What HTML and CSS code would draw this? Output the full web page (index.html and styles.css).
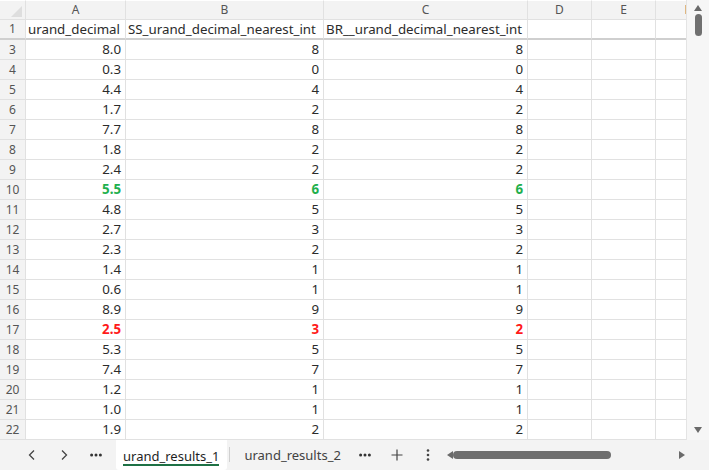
FILE: index.html
```html
<!DOCTYPE html>
<html>
<head>
<meta charset="utf-8">
<link rel="stylesheet" href="styles.css">
</head>
<body>
<div class="app">
  <div class="main">
    <div class="sheet">
      <div class="grid">
        <div class="corner"><span class="tri"></span></div>
        <div class="ch">A</div><div class="ch">B</div><div class="ch">C</div><div class="ch">D</div><div class="ch">E</div><div class="ch">F</div>

        <div class="rh frz">1</div>
        <div class="c frz tl">urand_decimal</div><div class="c frz tl">SS_urand_decimal_nearest_int</div><div class="c frz tl">BR__urand_decimal_nearest_int</div><div class="c frz"></div><div class="c frz"></div><div class="c frz"></div>

        <div class="rh">3</div><div class="c">8.0</div><div class="c">8</div><div class="c">8</div><div class="c"></div><div class="c"></div><div class="c"></div>
        <div class="rh">4</div><div class="c">0.3</div><div class="c">0</div><div class="c">0</div><div class="c"></div><div class="c"></div><div class="c"></div>
        <div class="rh">5</div><div class="c">4.4</div><div class="c">4</div><div class="c">4</div><div class="c"></div><div class="c"></div><div class="c"></div>
        <div class="rh">6</div><div class="c">1.7</div><div class="c">2</div><div class="c">2</div><div class="c"></div><div class="c"></div><div class="c"></div>
        <div class="rh">7</div><div class="c">7.7</div><div class="c">8</div><div class="c">8</div><div class="c"></div><div class="c"></div><div class="c"></div>
        <div class="rh">8</div><div class="c">1.8</div><div class="c">2</div><div class="c">2</div><div class="c"></div><div class="c"></div><div class="c"></div>
        <div class="rh">9</div><div class="c">2.4</div><div class="c">2</div><div class="c">2</div><div class="c"></div><div class="c"></div><div class="c"></div>
        <div class="rh">10</div><div class="c green">5.5</div><div class="c green">6</div><div class="c green">6</div><div class="c"></div><div class="c"></div><div class="c"></div>
        <div class="rh">11</div><div class="c">4.8</div><div class="c">5</div><div class="c">5</div><div class="c"></div><div class="c"></div><div class="c"></div>
        <div class="rh">12</div><div class="c">2.7</div><div class="c">3</div><div class="c">3</div><div class="c"></div><div class="c"></div><div class="c"></div>
        <div class="rh">13</div><div class="c">2.3</div><div class="c">2</div><div class="c">2</div><div class="c"></div><div class="c"></div><div class="c"></div>
        <div class="rh">14</div><div class="c">1.4</div><div class="c">1</div><div class="c">1</div><div class="c"></div><div class="c"></div><div class="c"></div>
        <div class="rh">15</div><div class="c">0.6</div><div class="c">1</div><div class="c">1</div><div class="c"></div><div class="c"></div><div class="c"></div>
        <div class="rh">16</div><div class="c">8.9</div><div class="c">9</div><div class="c">9</div><div class="c"></div><div class="c"></div><div class="c"></div>
        <div class="rh">17</div><div class="c red">2.5</div><div class="c red">3</div><div class="c red">2</div><div class="c"></div><div class="c"></div><div class="c"></div>
        <div class="rh">18</div><div class="c">5.3</div><div class="c">5</div><div class="c">5</div><div class="c"></div><div class="c"></div><div class="c"></div>
        <div class="rh">19</div><div class="c">7.4</div><div class="c">7</div><div class="c">7</div><div class="c"></div><div class="c"></div><div class="c"></div>
        <div class="rh">20</div><div class="c">1.2</div><div class="c">1</div><div class="c">1</div><div class="c"></div><div class="c"></div><div class="c"></div>
        <div class="rh">21</div><div class="c">1.0</div><div class="c">1</div><div class="c">1</div><div class="c"></div><div class="c"></div><div class="c"></div>
        <div class="rh">22</div><div class="c">1.9</div><div class="c">2</div><div class="c">2</div><div class="c"></div><div class="c"></div><div class="c"></div>
      </div>
    </div>
    <div class="vscroll">
      <span class="arr-up"></span>
      <span class="vthumb"></span>
      <span class="vspace"></span>
      <span class="arr-down"></span>
    </div>
  </div>
  <div class="tabbar">
    <div class="nav first">
      <svg width="10" height="12" viewBox="0 0 10 12"><path d="M7 1.5 L2.5 6 L7 10.5" fill="none" stroke="#444" stroke-width="1.3"/></svg>
    </div>
    <div class="nav">
      <svg width="10" height="12" viewBox="0 0 10 12"><path d="M3 1.5 L7.5 6 L3 10.5" fill="none" stroke="#444" stroke-width="1.3"/></svg>
    </div>
    <div class="nav">
      <svg width="12" height="4" viewBox="0 0 12 4"><circle cx="1.6" cy="2" r="1.5" fill="#333"/><circle cx="6" cy="2" r="1.5" fill="#333"/><circle cx="10.4" cy="2" r="1.5" fill="#333"/></svg>
    </div>
    <div class="tab active"><span class="tabtxt">urand_results_1</span></div>
    <div class="sep"></div>
    <div class="tab second"><span class="tabtxt">urand_results_2</span></div>
    <div class="nav">
      <svg width="12" height="4" viewBox="0 0 12 4"><circle cx="1.6" cy="2" r="1.5" fill="#333"/><circle cx="6" cy="2" r="1.5" fill="#333"/><circle cx="10.4" cy="2" r="1.5" fill="#333"/></svg>
    </div>
    <div class="nav">
      <svg width="12" height="12" viewBox="0 0 12 12"><path d="M6 0.5 V11.5 M0.5 6 H11.5" stroke="#444" stroke-width="1.2"/></svg>
    </div>
    <div class="nav kebab">
      <svg width="4" height="14" viewBox="0 0 4 14"><circle cx="2" cy="2.5" r="1.3" fill="#444"/><circle cx="2" cy="7" r="1.3" fill="#444"/><circle cx="2" cy="11.5" r="1.3" fill="#444"/></svg>
    </div>
    <div class="hscroll">
      <span class="arr-left"></span>
      <span class="hthumb"></span>
      <span class="hspace"></span>
      <span class="arr-right"></span>
    </div>
  </div>
</div>
</body>
</html>
```
FILE: styles.css
```css
* { box-sizing: border-box; }
html, body { margin: 0; padding: 0; background: #fff; }
body { font-family: "Noto Sans", "Open Sans", sans-serif; color: #222; }
.app { width: 709px; height: 470px; display: flex; flex-direction: column; overflow: hidden; }
.main { display: flex; height: 440px; }
.sheet { width: 687px; overflow: hidden; border-right: 1px solid #e4e4e4; }
.grid {
  display: grid;
  grid-template-columns: 26px 100px 198px 204px 64px 64px 64px;
  grid-template-rows: repeat(22, 20px);
  width: 720px;
}
.grid > div { border-right: 1px solid #e1e1e1; border-bottom: 1px solid #e1e1e1; font-size: 13.3px; line-height: 19px; white-space: nowrap; overflow: hidden; }
.corner { background: #f3f3f3; position: relative; border-top: 1px solid #fff; }
.tri { position: absolute; right: 3px; bottom: 2px; width: 0; height: 0; border-left: 11px solid transparent; border-bottom: 11px solid #dedede; }
.grid > .ch { background: #f3f3f3; text-align: center; color: #555; font-size: 12px; border-top: 1px solid #fff; line-height: 18px; }
.grid > .rh { background: #f3f3f3; text-align: center; color: #555; font-size: 12px; }
.c { text-align: right; padding-right: 4px; color: #2b2b2b; }
.tl { text-align: left; padding-left: 2px; padding-right: 0; }
.grid > .frz { border-bottom: 2px solid #cfcfcf; line-height: 18px; }
.green { color: #1fb04e; font-weight: 700; }
.red { color: #ff1a1a; font-weight: 700; }
.vscroll { width: 22px; background: #f6f6f6; display: flex; flex-direction: column; align-items: center; padding: 4px 0; }
.arr-up { width: 0; height: 0; border-left: 4.5px solid transparent; border-right: 4.5px solid transparent; border-bottom: 6px solid #6a6a6a; margin-top: 1px; }
.vthumb { width: 7px; height: 22px; background: #707070; border-radius: 4px; margin-top: 3px; }
.vspace { flex: 1; }
.arr-down { width: 0; height: 0; border-left: 4.5px solid transparent; border-right: 4.5px solid transparent; border-top: 6px solid #6a6a6a; margin-bottom: 3px; }
.tabbar { height: 30px; background: #f3f3f3; display: flex; align-items: stretch; font-size: 13px; color: #333; }
.nav { display: flex; align-items: center; justify-content: center; width: 32px; }
.nav.first { margin-left: 16px; }
.tab { display: flex; align-items: center; padding: 0 8px 0 7px; }
.tab.active { background: #fff; margin-left: 4px; border-radius: 0 0 3px 3px; }
.tab.active .tabtxt { color: #1f1f1f; border-bottom: 2px solid #1e7145; line-height: 16px; margin-top: 3px; }
.tab .tabtxt { color: #424242; }
.sep { width: 1px; background: #d0d0d0; margin: 7px 6px 8px 2px; }
.tab.second { padding-left: 8px; }
.kebab { width: 30px; }
.hscroll { flex: 1; display: flex; align-items: center; padding: 0 24px 0 4px; background: #f3f3f3; }
.arr-left { width: 0; height: 0; border-top: 4.5px solid transparent; border-bottom: 4.5px solid transparent; border-right: 6px solid #6a6a6a; }
.hthumb { width: 158px; height: 8px; background: #6e6e6e; border-radius: 4px; }
.hspace { flex: 1; }
.arr-right { width: 0; height: 0; border-top: 4.5px solid transparent; border-bottom: 4.5px solid transparent; border-left: 6px solid #6a6a6a; }
```
